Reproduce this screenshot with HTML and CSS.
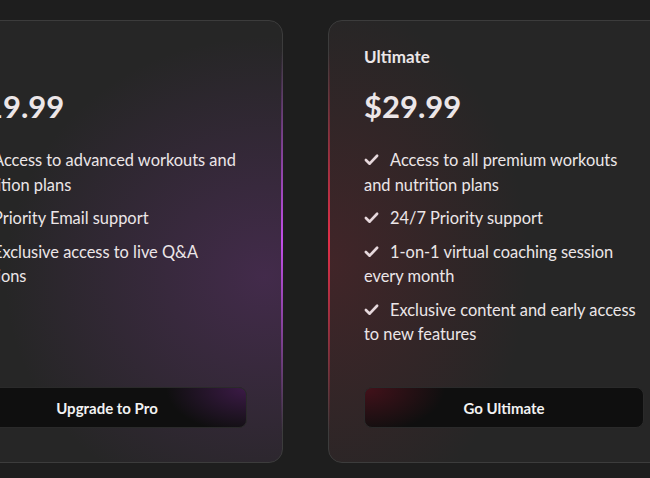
FILE: index.html
```html
<!DOCTYPE html>
<html>
<head>
<meta charset="utf-8">
<link rel="stylesheet" href="styles.css">
</head>
<body>
<div class="row">
  <div class="card card-pro">
    <h3 class="plan">Pro</h3>
    <div class="price">$19.99</div>
    <ul class="features">
      <li><svg class="check" viewBox="0 0 16 16"><path d="M2 8.5 L6 12.5 L14 4" /></svg>Access to advanced workouts and nutrition plans</li>
      <li><svg class="check" viewBox="0 0 16 16"><path d="M2 8.5 L6 12.5 L14 4" /></svg>Priority Email support</li>
      <li><svg class="check" viewBox="0 0 16 16"><path d="M2 8.5 L6 12.5 L14 4" /></svg>Exclusive access to live Q&amp;A sessions</li>
    </ul>
    <button class="btn btn-pro">Upgrade to Pro</button>
  </div>
  <div class="card card-ultimate">
    <h3 class="plan">Ultimate</h3>
    <div class="price">$29.99</div>
    <ul class="features">
      <li><svg class="check" viewBox="0 0 16 16"><path d="M2 8.5 L6 12.5 L14 4" /></svg>Access to all premium workouts and nutrition plans</li>
      <li><svg class="check" viewBox="0 0 16 16"><path d="M2 8.5 L6 12.5 L14 4" /></svg>24/7 Priority support</li>
      <li><svg class="check" viewBox="0 0 16 16"><path d="M2 8.5 L6 12.5 L14 4" /></svg>1-on-1 virtual coaching session every month</li>
      <li><svg class="check" viewBox="0 0 16 16"><path d="M2 8.5 L6 12.5 L14 4" /></svg>Exclusive content and early access to new features</li>
    </ul>
    <button class="btn btn-ultimate">Go Ultimate</button>
  </div>
</div>
</body>
</html>
```
FILE: styles.css
```css
* { box-sizing: border-box; }
html, body { margin: 0; padding: 0; }
body {
  background: #1e1e1e;
  font-family: "Lato", "Noto Sans", sans-serif;
  color: #ece6e8;
  width: 650px;
  height: 478px;
  overflow: hidden;
}
.row {
  display: flex;
  gap: 45px;
  padding-top: 20px;
  margin-left: -69px;
}
.card {
  position: relative;
  flex: 0 0 352px;
  height: 443px;
  border: 1px solid #3c3c3c;
  border-radius: 14px;
  background-color: #262626;
  padding: 25px 35px 34px 35px;
  display: flex;
  flex-direction: column;
}
.card-pro {
  background-image: radial-gradient(ellipse 260px 240px at 95% 58%, rgba(110, 50, 130, 0.40), rgba(110, 50, 130, 0) 100%);
}
.card-ultimate {
  background-image: radial-gradient(ellipse 200px 260px at 0% 55%, rgba(120, 35, 45, 0.33), rgba(120, 35, 45, 0) 100%);
}
.card::after {
  content: "";
  position: absolute;
  top: 30px;
  bottom: 30px;
  width: 2px;
}
.card-pro::after {
  right: -1px;
  background: linear-gradient(to bottom, rgba(200,80,240,0), #c24ee8 50%, rgba(200,80,240,0));
}
.card-ultimate::after {
  left: -1px;
  background: linear-gradient(to bottom, rgba(230,50,70,0), #e02f48 50%, rgba(230,50,70,0));
}
.plan {
  margin: 0;
  font-size: 17px;
  font-weight: 700;
  line-height: 22px;
  height: 22px;
}
.price {
  margin-top: 18px;
  font-size: 31px;
  font-weight: 700;
  line-height: 40px;
}
.features {
  list-style: none;
  margin: 22px 0 0 0;
  padding: 0;
  display: flex;
  flex-direction: column;
  gap: 9px;
  font-size: 16.4px;
  line-height: 24.5px;
}
.check {
  width: 15px;
  height: 15px;
  margin-right: 11px;
  vertical-align: -1px;
  fill: none;
  stroke: #e6d8dc;
  stroke-width: 2.8;
  stroke-linecap: round;
  stroke-linejoin: round;
}
.btn {
  margin-top: auto;
  height: 41px;
  border: 1px solid #2a2a2a;
  border-radius: 8px;
  background-color: #0f0f0f;
  color: #f2f2f2;
  font-family: inherit;
  font-size: 15px;
  font-weight: 700;
}
.btn-pro {
  background-image: radial-gradient(ellipse 80px 45px at 100% 0%, rgba(75, 30, 90, 0.75), rgba(75, 30, 90, 0));
}
.btn-ultimate {
  background-image: radial-gradient(ellipse 80px 45px at 0% 0%, rgba(85, 18, 30, 0.75), rgba(85, 18, 30, 0));
}
```
